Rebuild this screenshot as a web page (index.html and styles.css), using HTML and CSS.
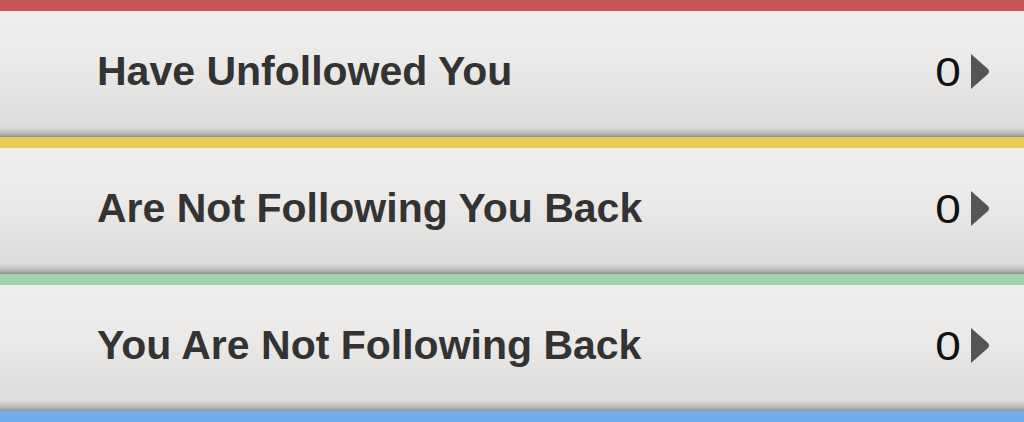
FILE: index.html
```html
<!DOCTYPE html>
<html lang="en">
<head>
  <meta charset="UTF-8" />
  <title>Followers</title>
  <link rel="stylesheet" href="styles.css">
</head>
<body>
  <div class="list">
    <div class="item red">
      <div class="bar"></div>
      <div class="row">
        <span class="label">Have Unfollowed You</span>
        <span class="count">0</span>
        <svg class="arrow" viewBox="0 0 20 37" width="20" height="37"><path d="M1 1 L18 16 Q20 18.5 18 21 L1 36 Z" fill="#555"/></svg>
      </div>
    </div>
    <div class="item yellow">
      <div class="bar"></div>
      <div class="row">
        <span class="label">Are Not Following You Back</span>
        <span class="count">0</span>
        <svg class="arrow" viewBox="0 0 20 37" width="20" height="37"><path d="M1 1 L18 16 Q20 18.5 18 21 L1 36 Z" fill="#555"/></svg>
      </div>
    </div>
    <div class="item green">
      <div class="bar"></div>
      <div class="row">
        <span class="label">You Are Not Following Back</span>
        <span class="count">0</span>
        <svg class="arrow" viewBox="0 0 20 37" width="20" height="37"><path d="M1 1 L18 16 Q20 18.5 18 21 L1 36 Z" fill="#555"/></svg>
      </div>
    </div>
    <div class="item blue">
      <div class="bar"></div>
    </div>
  </div>
</body>
</html>
```

FILE: styles.css
```css
body {
  margin: 0;
  background-color: #eeeef0;
  font-family: 'Liberation Sans', Arial, sans-serif;
  overflow: hidden;
}

.bar {
  height: 11px;
}

.red .bar { background-color: #c9545a; }
.yellow .bar { background-color: #e9c95a; }
.green .bar { background-color: #a0d2ac; }
.blue .bar { background-color: #6eaeee; }

.row {
  height: 126px;
  display: flex;
  align-items: center;
  padding: 0 34px 0 97px;
  box-sizing: border-box;
  background: linear-gradient(to bottom, #efeeec 0%, #ebeae8 40%, #dcdcdc 92%, #b9b9b9 97%, #8f8f8f 100%);
}

.label {
  flex: 1;
  font-size: 41px;
  font-weight: bold;
  color: #333333;
  margin-top: -6px;
}

.count {
  font-size: 40px;
  color: #111111;
  margin-right: 11px;
  margin-top: -4px;
  display: inline-block;
  transform: scaleX(1.15);
}

.arrow {
  display: block;
  margin-top: -6px;
}
```
